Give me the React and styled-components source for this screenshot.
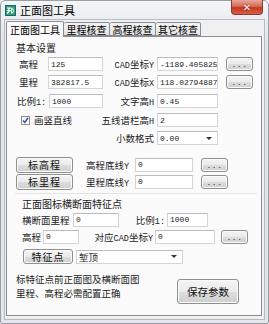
import React from "react";
import styled, { createGlobalStyle } from "styled-components";

const Global = createGlobalStyle`
  html, body { margin: 0; padding: 0; background: #ffffff; overflow: hidden; }
  * { box-sizing: border-box; }
`;

const Window = styled.div`
  width: 269px;
  height: 324px;
  background: linear-gradient(#f3f5f7, #e2e5e9 40px, #e3e6ea);
  border: 1px solid #9a9ea4;
  border-radius: 5px 5px 2px 2px;
  display: flex;
  flex-direction: column;
  font-family: "Noto Sans CJK SC", "Noto Sans", sans-serif;
  font-size: 9.5px;
  color: #1c1c1c;
`;

const TitleBar = styled.div`
  height: 18px;
  display: flex;
  align-items: center;
  padding-left: 4px;
  position: relative;
`;

const Title = styled.span`
  font-size: 11px;
  margin-left: 4px;
  color: #000;
`;

const CloseButton = styled.div`
  position: absolute;
  top: -1px;
  right: 5px;
  width: 32px;
  height: 15px;
  border: 1px solid #8a3a30;
  border-top: none;
  border-radius: 0 0 4px 4px;
  background: linear-gradient(#e9a89b, #d66b58 45%, #c4381f 55%, #d8604a);
  display: flex;
  align-items: center;
  justify-content: center;
  color: #fff;
  font-family: "DejaVu Sans", sans-serif;
  font-weight: bold;
  font-size: 10px;
  text-shadow: 0 0 2px #5a1a10;
`;

const Client = styled.div`
  flex: 1;
  margin: 0 3px 3px 3px;
  background: #f0f0f0;
  border: 1px solid #b8bcc2;
  padding: 1px 2px 3px 1px;
  display: flex;
  flex-direction: column;
`;

const TabStrip = styled.div`
  height: 15px;
  display: flex;
  align-items: flex-end;
  position: relative;
  z-index: 1;
`;

const Tab = styled.div`
  width: ${({ w }) => w}px;
  height: ${({ active }) => (active ? 16 : 14)}px;
  margin-bottom: ${({ active }) => (active ? -1 : 0)}px;
  border: 1px solid #898c95;
  border-bottom: ${({ active }) => (active ? "none" : "1px solid #898c95")};
  border-left: ${({ first, active }) => (first || active ? "1px solid #898c95" : "none")};
  background: ${({ active }) =>
    active ? "#fbfbfb" : "linear-gradient(#f2f2f2, #e4e4e4)"};
  display: flex;
  align-items: center;
  justify-content: center;
  font-size: 10px;
  color: #000;
  border-radius: 2px 2px 0 0;
`;

const Panel = styled.div`
  flex: 1;
  background: #fbfbfb;
  border: 1px solid #898c95;
  padding: 3px 4px 0 9px;
  display: flex;
  flex-direction: column;
`;

const SectionTitle = styled.div`
  height: 15px;
  display: flex;
  align-items: center;
  font-size: 10px;
`;

const Row = styled.div`
  height: ${({ h }) => h || 18}px;
  margin-top: ${({ mt }) => mt || 0}px;
  display: flex;
  align-items: center;
`;

const Label = styled.span`
  width: ${({ w }) => w}px;
  flex-shrink: 0;
  text-align: ${({ right }) => (right ? "right" : "left")};
  padding-left: ${({ pl }) => pl || 0}px;
  padding-right: ${({ pr }) => pr || 0}px;
  white-space: nowrap;
`;

const Latin = styled.span`
  font-family: "Liberation Mono", monospace;
  font-size: 8.5px;
`;

const Input = styled.div`
  width: ${({ w }) => w}px;
  height: 14px;
  flex-shrink: 0;
  background: #ffffff;
  border: 1px solid #d3d5d9;
  border-top-color: #b9bcc1;
  padding-left: 2px;
  display: flex;
  align-items: center;
  font-family: "Liberation Mono", monospace;
  font-size: 8px;
  color: #222;
  white-space: nowrap;
  overflow: hidden;
`;

const Select = styled(Input)`
  justify-content: space-between;
  padding-right: 5px;
  margin-left: ${({ ml }) => ml || 0}px;
  font-family: ${({ cjk }) => (cjk ? '"Noto Sans CJK SC", sans-serif' : '"Liberation Mono", monospace')};
  font-size: ${({ cjk }) => (cjk ? 9.5 : 8)}px;
  &::after {
    content: "";
    border-left: 3px solid transparent;
    border-right: 3px solid transparent;
    border-top: 3px solid #333;
  }
`;

const Button = styled.div`
  width: ${({ w }) => w}px;
  height: ${({ h }) => h || 15}px;
  margin-left: ${({ ml }) => ml || 0}px;
  flex-shrink: 0;
  border: 1px solid #8e8f8f;
  border-radius: 3px;
  background: linear-gradient(#f4f4f4, #ebebeb 50%, #dddddd 51%, #cfcfcf);
  box-shadow: inset 0 0 0 1px #fbfbfb;
  display: flex;
  align-items: center;
  justify-content: center;
  font-size: ${({ fs }) => fs || 10}px;
  color: #111;
  letter-spacing: ${({ ls }) => ls || 0}px;
`;

const SaveButton = styled(Button)`
  margin-top: 8px;
  margin-right: 18px;
`;

const Dots = styled.span`
  font-family: "Liberation Mono", monospace;
  font-size: 8px;
  color: #333;
  letter-spacing: 0.5px;
  margin-top: 1px;
`;

const Checkbox = styled.span`
  width: 9px;
  height: 9px;
  margin: 0 4px 0 5px;
  border: 1px solid #8f8f8f;
  background: linear-gradient(#e9eef5, #ffffff);
  display: flex;
  align-items: center;
  justify-content: center;
`;

const Group = styled.div`
  margin: 3px 0 0 -1px;
  padding: 2px 0 3px 7px;
  border-top: 1px solid #e4e4e4;
  display: flex;
  flex-direction: column;
`;

const Footer = styled.div`
  display: flex;
  justify-content: space-between;
  margin-top: 3px;
`;

const Note = styled.div`
  padding-top: 1px;
  line-height: 14px;
  font-size: 9.5px;
`;

const AppIcon = () => (
  <svg width="11" height="11" viewBox="0 0 11 11">
    <rect x="0" y="0" width="11" height="11" fill="#2f9a8c" />
    <rect x="0.5" y="0.5" width="10" height="10" fill="none" stroke="#1a6b60" />
    <path d="M2 3h3l-2 2.5h2l-3 3" stroke="#fff" strokeWidth="1.2" fill="none" />
    <path d="M6.5 3v5.5M6.5 3l2.5 2.5M6.5 8.5l2.5-2.5" stroke="#d6f2a0" strokeWidth="1.1" fill="none" />
  </svg>
);

const Check = () => (
  <svg width="7" height="7" viewBox="0 0 7 7">
    <path d="M1 3.5l1.8 2L6 1" stroke="#2a4f9c" strokeWidth="1.4" fill="none" />
  </svg>
);

const MoreButton = ({ ml }) => (
  <Button w={27} h={14} ml={ml}>
    <Dots>...</Dots>
  </Button>
);

export default function App() {
  return (
    <>
      <Global />
      <Window>
        <TitleBar>
          <AppIcon />
          <Title>正面图工具</Title>
          <CloseButton>✕</CloseButton>
        </TitleBar>
        <Client>
          <TabStrip>
            <Tab w={58} active first>正面图工具</Tab>
            <Tab w={46}>里程核查</Tab>
            <Tab w={46}>高程核查</Tab>
            <Tab w={45}>其它核查</Tab>
          </TabStrip>
          <Panel>
            <SectionTitle>基本设置</SectionTitle>
            <Row>
              <Label w={32} pl={3}>高程</Label>
              <Input w={55}>125</Input>
              <Label w={54} right pr={3}><Latin>CAD</Latin>坐标<Latin>Y</Latin></Label>
              <Input w={61}>-1189.405825</Input>
              <MoreButton ml={8} />
            </Row>
            <Row>
              <Label w={32} pl={3}>里程</Label>
              <Input w={55}>382817.5</Input>
              <Label w={54} right pr={3}><Latin>CAD</Latin>坐标<Latin>X</Latin></Label>
              <Input w={61}>118.02794887</Input>
              <MoreButton ml={8} />
            </Row>
            <Row h={20}>
              <Label w={33} pl={1}>比例<Latin>1:</Latin></Label>
              <Input w={54}>1000</Input>
              <Label w={54} right pr={3}>文字高<Latin>H</Latin></Label>
              <Input w={61}>0.45</Input>
            </Row>
            <Row>
              <Checkbox><Check /></Checkbox>
              <Label w={55}>画竖直线</Label>
              <Label w={68} right pr={3}>五线谱栏高<Latin>H</Latin></Label>
              <Input w={61}>2</Input>
            </Row>
            <Row>
              <Label w={141} right pr={3}>小数格式</Label>
              <Select w={61}>0.00</Select>
            </Row>

            <Row h={17} mt={9}>
              <Button w={57} h={16} ls={1}>标高程</Button>
              <Label w={62} pl={13}>高程底线<Latin>Y</Latin></Label>
              <Input w={58}>0</Input>
              <MoreButton ml={8} />
            </Row>
            <Row h={17}>
              <Button w={57} h={16} ls={1}>标里程</Button>
              <Label w={62} pl={13}>里程底线<Latin>Y</Latin></Label>
              <Input w={58}>0</Input>
              <MoreButton ml={8} />
            </Row>

            <Group>
              <SectionTitle>正面图标横断面特征点</SectionTitle>
              <Row h={17}>
                <Label w={51}>横断面里程</Label>
                <Input w={46}>0</Input>
                <Label w={48} right pr={2}>比例<Latin>1:</Latin></Label>
                <Input w={41}>1000</Input>
              </Row>
              <Row h={17}>
                <Label w={21}>高程</Label>
                <Input w={36}>0</Input>
                <Label w={76} right pr={2}>对应<Latin>CAD</Latin>坐标<Latin>Y</Latin></Label>
                <Input w={60}>0</Input>
                <MoreButton ml={6} />
              </Row>
              <Row h={17} mt={3}>
                <Button w={50} ml={1} ls={1}>特征点</Button>
                <Select w={107} ml={3} cjk>堑顶</Select>
              </Row>
            </Group>

            <Footer>
              <Note>
                标特征点前正面图及横断面图
                <br />
                里程、高程必需配置正确
              </Note>
              <SaveButton w={62} h={25} fs={10.5}>
                保存参数
              </SaveButton>
            </Footer>
          </Panel>
        </Client>
      </Window>
    </>
  );
}
